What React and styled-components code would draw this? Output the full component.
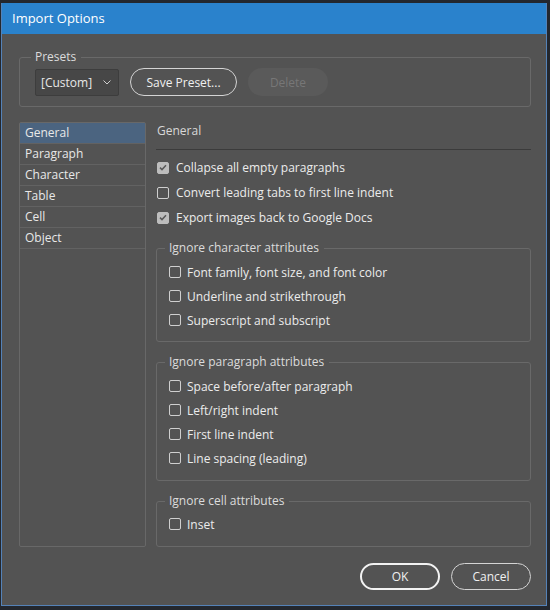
import React from 'react';
import styled, { createGlobalStyle } from 'styled-components';

const GlobalStyle = createGlobalStyle`
  html, body {
    margin: 0;
    background: #23272e;
  }
  body {
    font-family: "Open Sans", "Noto Sans", sans-serif;
    font-size: 12px;
    color: #e4e4e4;
  }
`;

const Window = styled.div`
  box-sizing: border-box;
  margin: 3px 0 0 1px;
  width: 546px;
  height: 603px;
  border: 1px solid #5482b8;
  border-top: none;
  background: #535353;
  display: flex;
  flex-direction: column;
`;

const TitleBar = styled.div`
  height: 31px;
  background: #2a82cc;
  color: #fff;
  font-size: 13px;
  line-height: 31px;
  padding-left: 10px;
`;

const Content = styled.div`
  padding: 16px 15px 0 17px;
  display: flex;
  flex-direction: column;
`;

const Group = styled.fieldset`
  margin: ${(p) => p.$top || 0}px 0 0;
  padding: ${(p) => p.$padTop ?? 5}px 10px ${(p) => p.$padBottom ?? 10}px ${(p) => p.$padLeft ?? 11}px;
  border: 1px solid #696969;
  border-radius: 3px;
  min-inline-size: 0;
`;

const Legend = styled.legend`
  padding: 0 5px 0 4px;
  margin-left: -4px;
  line-height: 14px;
  color: #dcdcdc;
`;

const PresetRow = styled.div`
  display: flex;
  align-items: center;
  gap: 11px;
`;

const Select = styled.div`
  box-sizing: border-box;
  width: 84px;
  height: 27px;
  padding: 0 7px 0 5px;
  display: flex;
  align-items: center;
  justify-content: space-between;
  background: #474747;
  border: 1px solid #3d3d3d;
  border-radius: 2px;
  color: #e8e8e8;
`;

const Pill = styled.button`
  box-sizing: border-box;
  width: ${(p) => p.$w}px;
  height: ${(p) => p.$h || 28}px;
  border-radius: 14px;
  font: inherit;
  font-size: 12px;
  padding: 0;
  cursor: default;
  color: ${(p) => (p.disabled ? '#777' : '#f0f0f0')};
  background: ${(p) => (p.disabled ? '#5a5a5a' : 'transparent')};
  border: ${(p) =>
    p.disabled ? 'none' : p.$primary ? '2px solid #f2f2f2' : '1px solid #d4d4d4'};
`;

const Main = styled.div`
  margin-top: 15px;
  display: grid;
  grid-template-columns: 127px 375px;
  gap: 10px;
  height: 425px;
`;

const NavList = styled.div`
  border: 1px solid #686868;
  border-radius: 2px;
`;

const NavItem = styled.div`
  height: 20px;
  line-height: 20px;
  padding-left: 5px;
  border-bottom: 1px solid #626262;
  background: ${(p) => (p.$active ? '#4b6480' : 'transparent')};
  color: #e8e8e8;
`;

const Panel = styled.div`
  display: flex;
  flex-direction: column;
`;

const PanelTitle = styled.div`
  height: 27px;
  line-height: 18px;
  padding-left: 1px;
  border-bottom: 1px solid #3b3b3b;
  color: #d8d8d8;
  margin-bottom: 5px;
`;

const Option = styled.label`
  display: flex;
  align-items: center;
  gap: ${(p) => p.$gap || 6}px;
  height: ${(p) => p.$h || 24}px;
  padding-left: ${(p) => p.$indent || 0}px;
  color: #ececec;
`;

const Box = styled.span`
  box-sizing: border-box;
  width: 12px;
  height: 12px;
  border-radius: 2px;
  flex: none;
  display: flex;
  align-items: center;
  justify-content: center;
  border: 1px solid ${(p) => (p.$checked ? '#bdbdbd' : '#cfcfcf')};
  background: ${(p) => (p.$checked ? '#bdbdbd' : 'transparent')};
`;

const Footer = styled.div`
  margin-top: 16px;
  display: flex;
  justify-content: flex-end;
  gap: 11px;
`;

function Check({ checked, label, h, indent, gap }) {
  return (
    <Option $h={h} $indent={indent} $gap={gap}>
      <Box $checked={checked}>
        {checked && (
          <svg width="8" height="7" viewBox="0 0 8 7">
            <polyline points="1,3.6 3,5.6 7,1.2" fill="none" stroke="#595959" strokeWidth="1.5" />
          </svg>
        )}
      </Box>
      {label}
    </Option>
  );
}

const sections = ['General', 'Paragraph', 'Character', 'Table', 'Cell', 'Object'];

const charAttrs = ['Font family, font size, and font color', 'Underline and strikethrough', 'Superscript and subscript'];
const paraAttrs = ['Space before/after paragraph', 'Left/right indent', 'First line indent', 'Line spacing (leading)'];

export default function App() {
  return (
    <>
      <GlobalStyle />
      <Window>
        <TitleBar>Import Options</TitleBar>
        <Content>
          <Group $padTop={4} $padBottom={10} $padLeft={15}>
            <Legend>Presets</Legend>
            <PresetRow>
              <Select>
                [Custom]
                <svg width="8" height="5" viewBox="0 0 8 5">
                  <polyline points="0.5,0.5 4,4 7.5,0.5" fill="none" stroke="#cfcfcf" strokeWidth="1" />
                </svg>
              </Select>
              <Pill $w={107}>Save Preset...</Pill>
              <Pill $w={80} disabled>Delete</Pill>
            </PresetRow>
          </Group>

          <Main>
            <NavList>
              {sections.map((s, i) => (
                <NavItem key={s} $active={i === 0}>{s}</NavItem>
              ))}
            </NavList>

            <Panel>
              <PanelTitle>General</PanelTitle>
              <Check h={25} indent={1} gap={7} checked label="Collapse all empty paragraphs" />
              <Check h={25} indent={1} gap={7} label="Convert leading tabs to first line indent" />
              <Check h={25} indent={1} gap={7} checked label="Export images back to Google Docs" />

              <Group $top={11} $padTop={5} $padBottom={9} $padLeft={12}>
                <Legend>Ignore character attributes</Legend>
                {charAttrs.map((a) => (
                  <Check key={a} label={a} />
                ))}
              </Group>

              <Group $top={13} $padTop={5} $padBottom={10} $padLeft={12}>
                <Legend>Ignore paragraph attributes</Legend>
                {paraAttrs.map((a) => (
                  <Check key={a} label={a} />
                ))}
              </Group>

              <Group $top={13} $padTop={4} $padBottom={10} $padLeft={12}>
                <Legend>Ignore cell attributes</Legend>
                <Check label="Inset" />
              </Group>
            </Panel>
          </Main>

          <Footer>
            <Pill $w={80} $h={27} $primary>OK</Pill>
            <Pill $w={80} $h={27}>Cancel</Pill>
          </Footer>
        </Content>
      </Window>
    </>
  );
}
